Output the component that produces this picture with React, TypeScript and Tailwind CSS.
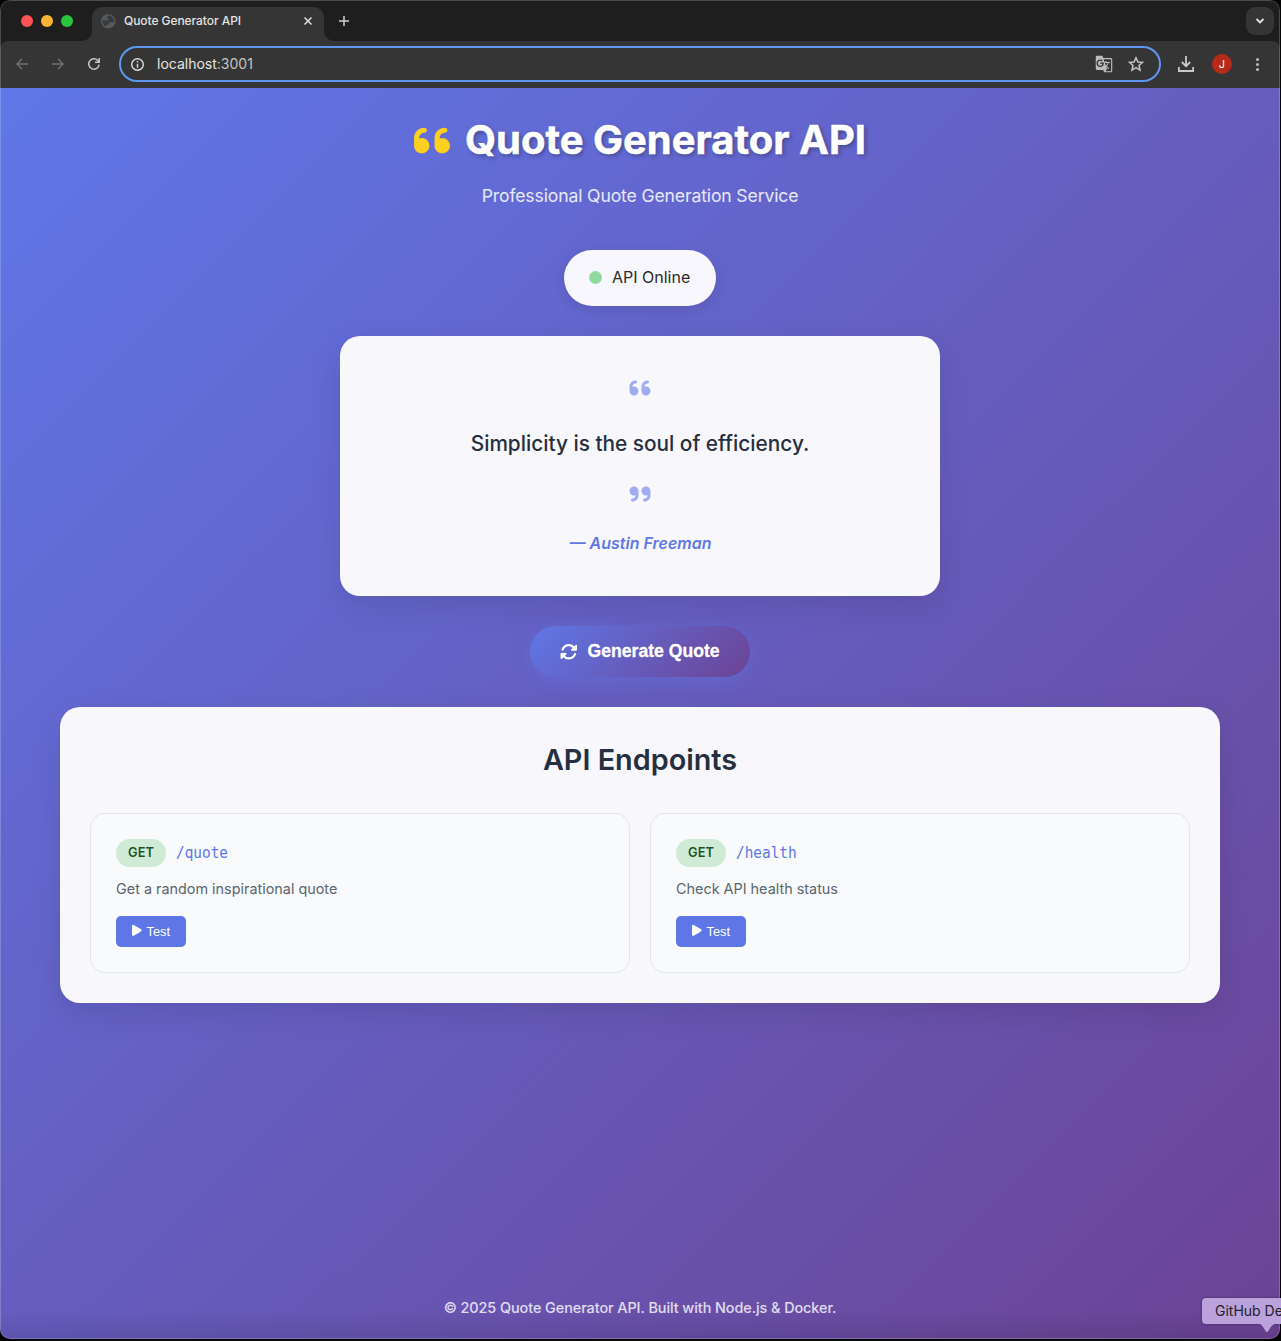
import type { ReactNode } from "react";
import { FaRotate, FaPlay } from "react-icons/fa6";
import { MdGTranslate, MdPublic } from "react-icons/md";

function QuoteMark({ className }: { className: string }) {
  return (
    <svg className={className} viewBox="0 0 448 512" fill="currentColor">
      <path d="M96 224c-11.3 0-22 2.3-32 5.9V224c0-35.3 28.7-64 64-64 17.7 0 32-14.3 32-32s-14.3-32-32-32C57.4 96 0 153.4 0 224v96c0 53 43 96 96 96s96-43 96-96-43-96-96-96z" />
      <path d="M352 224c-11.3 0-22 2.3-32 5.9V224c0-35.3 28.7-64 64-64 17.7 0 32-14.3 32-32s-14.3-32-32-32c-70.6 0-128 57.4-128 128v96c0 53 43 96 96 96s96-43 96-96-43-96-96-96z" />
    </svg>
  );
}

function TabStrip() {
  return (
    <div className="flex h-[41px] items-end bg-[#1e1e1e]">
      <div className="flex h-[41px] w-[92px] items-center gap-2 pl-[21px]">
        <span className="size-3 rounded-full bg-[#ff5154]" />
        <span className="size-3 rounded-full bg-[#fdb232]" />
        <span className="size-3 rounded-full bg-[#2bc640]" />
      </div>
      <div className="relative flex h-[34px] w-[232px] items-center rounded-t-[10px] bg-[#353535] pb-[6px] pl-[9px]">
        <svg className="absolute bottom-0 -left-[10px] size-[10px]" viewBox="0 0 10 10">
          <path d="M10 0A10 10 0 0 1 0 10H10Z" fill="#353535" />
        </svg>
        <svg className="absolute -right-[10px] bottom-0 size-[10px]" viewBox="0 0 10 10">
          <path d="M0 0A10 10 0 0 0 10 10H0Z" fill="#353535" />
        </svg>
        <svg className="-ml-px size-[16.5px]" viewBox="0 0 16 16">
          <circle cx="8" cy="8" r="7" fill="#565a5e" />
          <path
            d="M8.6 2.3C7 3.2 6.2 4.600 7.600 5.400 9 6.100 8.200 7.200 7 7.300 5.500 7.400 4.200 6.900 2.300 7.300 2.200 10 3.800 12.300 6 13.200 6.200 11.800 7 11.400 8.200 10.900 9.200 10.400 9 9 10.200 8.800 11.500 8.600 12.300 9.300 13.600 8.700 13.900 5.600 11.700 2.800 8.600 2.300Z"
            fill="#383a3c"
          />
        </svg>
        <span className="ml-[7.500px] w-[180px] text-[12px] leading-none font-medium tracking-[-0.06px] whitespace-nowrap text-[#e3e3e3]">
          Quote Generator API
        </span>
        <svg className="size-[8px]" viewBox="0 0 8 8" stroke="#e0e0e0" strokeWidth="1.5">
          <path d="M.5.5l7 7M7.5.5l-7 7" />
        </svg>
      </div>
      <div className="flex h-[41px] flex-1 items-center pl-[15px]">
        <svg className="size-[10px]" viewBox="0 0 10 10" stroke="#cfcfcf" strokeWidth="1.5">
          <path d="M5 0v10M0 5h10" />
        </svg>
      </div>
      <div className="mr-[6px] mb-[6px] flex size-[28px] items-center justify-center rounded-[9px] bg-[#353535]">
        <svg className="size-[8px]" viewBox="0 0 8 8" fill="none" stroke="#e6e6e6" strokeWidth="1.8">
          <path d="M.5 2L4 5.5 7.5 2" />
        </svg>
      </div>
    </div>
  );
}

function Toolbar() {
  return (
    <div className="bg-[#1e1e1e]">
      <div className="flex h-[47px] items-center rounded-t-[8px] bg-[#353535] pb-px">
        <svg className="ml-[16px] size-[12px]" viewBox="0 0 12 12" fill="none" stroke="#727272" strokeWidth="1.4">
          <path d="M12 6H1M6 .8L.9 6 6 11.2" />
        </svg>
        <svg className="ml-[24px] size-[12px]" viewBox="0 0 12 12" fill="none" stroke="#727272" strokeWidth="1.4">
          <path d="M0 6h11M6 .8L11.1 6 6 11.2" />
        </svg>
        <svg className="ml-[24px] size-[12px]" viewBox="0 0 12 12" fill="none" stroke="#c9c9c9" strokeWidth="1.5">
          <path d="M11.1 6.6A5.2 5.2 0 1 1 9.800 2.500L11 3.800" />
          <path d="M11.200 0v4.200H7" />
        </svg>
        <div className="ml-[19px] flex h-[36px] w-[1042px] items-center rounded-full border-2 border-[#5f96f2] pr-[15px] pl-[10px]">
          <svg className="size-[13px]" viewBox="0 0 13 13" fill="none" stroke="#dcdcdc" strokeWidth="1.4">
            <circle cx="6.5" cy="6.5" r="5.8" />
            <path d="M6.5 5.7v4M6.5 3.1v1.5" />
          </svg>
          <span className="ml-[13px] flex-1 text-[14px] leading-none text-[#c4c4c4]">
            <span className="text-[#e6e6e6]">localhost</span>:3001
          </span>
          <MdGTranslate className="size-[18px] text-[#bdbdbd]" />
          <svg className="ml-[15px] size-[16px]" viewBox="0 0 15 15" fill="none" stroke="#c4c4c4" strokeWidth="1.4">
            <path d="M7.5 1.600l1.800 4 4.300.4-3.300 2.900 1 4.300-3.800-2.300-3.800 2.300 1-4.300L1.400 6l4.300-.4z" />
          </svg>
        </div>
        <svg className="ml-[17px] size-[16px]" viewBox="0 0 16 16" fill="none" stroke="#c9c9c9" strokeWidth="1.8">
          <path d="M8 0v9.6M3.8 6L8 10.2 12.2 6M.9 11v4h14.2v-4" />
        </svg>
        <span className="ml-[18px] flex size-[20px] items-center justify-center rounded-full bg-[#b52a18] text-[11px] leading-none text-white">
          J
        </span>
        <span className="ml-[24px] flex flex-col items-center gap-[2px]">
          <span className="size-[3px] rounded-full bg-[#bdbdbd]" />
          <span className="size-[3px] rounded-full bg-[#bdbdbd]" />
          <span className="size-[3px] rounded-full bg-[#bdbdbd]" />
        </span>
      </div>
    </div>
  );
}

function Endpoint({ path, children }: { path: string; children: ReactNode }) {
  return (
    <div className="h-[160px] rounded-[15px] border border-[#dfe5ee] bg-[#f8fafc] px-[25px] pt-[25px]">
      <div className="flex h-[28px] items-center gap-[10px]">
        <span className="flex h-[28px] w-[50px] items-center justify-center rounded-full bg-[#cfebd6] text-[12.8px] font-semibold text-[#1b5527]">
          GET
        </span>
        <span className="inline-block scale-y-110 pt-px font-['DejaVu_Sans_Mono',monospace] text-[14.4px] text-[#5f77e6]">
          {path}
        </span>
      </div>
      <p className="mt-[10px] h-[23px] text-[14.4px] leading-[23px] text-[#5b666f]">{children}</p>
      <button className="mt-[16px] flex h-[31px] w-[70px] items-center rounded-[5px] bg-[#5f77e6] pl-[16px] text-white">
        <FaPlay className="-mt-[2px] h-[12.8px] w-[9.6px]" />
        <span className="ml-[5px] pt-[2px] font-['Liberation_Sans',sans-serif] text-[12.8px] leading-none">Test</span>
      </button>
    </div>
  );
}

function Page() {
  return (
    <main className="flex h-[1251px] flex-col items-center bg-[linear-gradient(135deg,#5f77e8_0%,#6c4395_100%)] px-[60px] pt-[20px]">
      <h1 className="flex h-[64px] items-center text-[40px] leading-[64px] font-bold whitespace-nowrap text-white [text-shadow:2px_2px_4px_rgba(0,0,0,0.3)]">
        <QuoteMark className="mr-[15px] h-[41px] w-[36px] text-[#fdd020]" />
        <span className="[-webkit-text-stroke:0.5px_white]">Quote Generator API</span>
      </h1>
      <p className="mt-[10px] h-[28px] text-[17.6px] leading-[28px] tracking-[-0.14px] text-white/85">
        Professional Quote Generation Service
      </p>
      <div className="mt-[40px] flex h-[56px] w-[152px] items-center rounded-full bg-[#f8f7fd] pb-[2px] pl-[25px] shadow-[0_4px_15px_rgba(0,0,0,0.1)]">
        <span className="size-[13px] rounded-full bg-[#8edb9d]" />
        <span className="ml-[10px] text-[16px] whitespace-nowrap text-[#2c2c2c]">API Online</span>
      </div>
      <section className="mt-[30px] flex h-[260px] w-[600px] flex-col items-center rounded-[20px] bg-[#f8f7fc] pt-[40px] shadow-[0_10px_30px_rgba(0,0,0,0.1)]">
        <QuoteMark className="h-[24px] w-[22px] text-[#9fadf0]" />
        <p className="mt-[26px] h-[35px] text-[20.8px] leading-[35px] font-medium whitespace-nowrap text-[#262f40]">
          Simplicity is the soul of efficiency.
        </p>
        <QuoteMark className="mt-[21px] h-[24px] w-[22px] rotate-180 text-[#9fadf0]" />
        <p className="mt-[24px] h-[26px] pl-px text-[16px] leading-[26px] font-semibold text-[#5f77e6] italic [font-synthesis:style]">
          — Austin Freeman
        </p>
      </section>
      <button className="mt-[30px] flex h-[51px] w-[220px] items-center rounded-full bg-[linear-gradient(135deg,#5f77e6_0%,#6c4395_100%)] pl-[30px] text-white shadow-[0_4px_15px_rgba(95,119,230,0.4)]">
        <FaRotate className="size-[17.6px]" />
        <span className="ml-[10px] font-['Liberation_Sans',sans-serif] text-[17.6px] leading-none font-bold whitespace-nowrap [-webkit-text-stroke:0.3px_white]">
          Generate Quote
        </span>
      </button>
      <section className="mt-[30px] h-[296px] w-full rounded-[20px] bg-[#f8f7fc] px-[30px] pt-[30px] shadow-[0_10px_30px_rgba(0,0,0,0.1)]">
        <h2 className="h-[46px] text-center text-[28.8px] leading-[46px] font-semibold text-[#262f40]">API Endpoints</h2>
        <div className="mt-[30px] grid grid-cols-2 gap-[20px]">
          <Endpoint path="/quote">Get a random inspirational quote</Endpoint>
          <Endpoint path="/health">Check API health status</Endpoint>
        </div>
      </section>
      <footer className="mt-auto mb-[20px] h-[23px] text-[14.4px] leading-[23px] font-medium tracking-[-0.06px] text-white/80">
        © 2025 Quote Generator API. Built with Node.js &amp; Docker.
      </footer>
    </main>
  );
}

export default function App() {
  return (
    <div className="relative h-[1341px] w-[1281px] overflow-hidden bg-[#050505] font-['Inter',sans-serif]">
      <div className="relative h-[1339px] w-[1280px] overflow-hidden rounded-[10px]">
        <TabStrip />
        <Toolbar />
        <Page />
        <div className="pointer-events-none absolute inset-x-0 bottom-0 h-[30px] bg-linear-to-b from-transparent to-black/10" />
        <div className="pointer-events-none absolute inset-0 rounded-[10px] border border-white/20" />
      </div>
      <div className="absolute top-[1298px] left-[1202px] h-[26px] w-[100px] rounded-[4px] bg-[#bba2dc] pl-[13px] text-[14px] leading-[26px] whitespace-nowrap text-[#232029] shadow-[0_0_3px_rgba(0,0,0,0.4)]">
        GitHub De
      </div>
      <svg className="absolute top-[1324px] left-[1259px] h-[8px] w-[16px]" viewBox="0 0 16 8">
        <path d="M0 0C4 0 6 8 8 8S12 0 16 0Z" fill="#bba2dc" />
      </svg>
    </div>
  );
}
